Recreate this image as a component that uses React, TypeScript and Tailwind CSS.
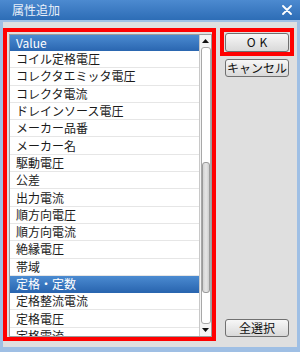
import React from "react";

// 属性追加ダイアログ
const items = [
  "コイル定格電圧",
  "コレクタエミッタ電圧",
  "コレクタ電流",
  "ドレインソース電圧",
  "メーカー品番",
  "メーカー名",
  "駆動電圧",
  "公差",
  "出力電流",
  "順方向電圧",
  "順方向電流",
  "絶縁電圧",
  "帯域",
  "定格・定数",
  "定格整流電流",
  "定格電圧",
  "定格電流",
];

const selected = "定格・定数";

const font = {
  fontFamily: '"Noto Sans CJK JP", "Noto Sans", sans-serif',
};

const DialogButton = ({ label, wide }: { label: string; wide?: boolean }) => (
  <button
    className={`w-[64px] rounded-[3px] border border-[#707070] bg-gradient-to-b from-[#f7f7f7] to-[#d9d9d9] text-[12px] leading-none text-[#111] ${
      wide ? "tracking-[4px] pl-[4px]" : ""
    }`}
  >
    {label}
  </button>
);

export default function App() {
  return (
    <div
      className="w-[300px] h-[352px] flex flex-col overflow-hidden"
      style={font}
    >
      {/* タイトルバー */}
      <div className="h-[20px] shrink-0 flex items-center justify-between bg-gradient-to-b from-[#4c8ad0] to-[#2d6db6] pl-[12px] pr-[8px]">
        <span className="text-[12px] leading-none text-[#e9f0f9]">属性追加</span>
        <svg width="10" height="10" viewBox="0 0 10 10">
          <path
            d="M1 1 L9 9 M9 1 L1 9"
            stroke="#ffffff"
            strokeWidth="1.8"
            strokeLinecap="round"
          />
        </svg>
      </div>

      <div className="flex-1 min-h-0 flex border-t-2 border-x-[3px] border-b-[5px] border-[#9fbfe4] bg-[#dfdfdf] pt-[6px] pb-[6px]">
        {/* リスト */}
        <div className="w-[213px] min-h-0 border-4 border-[#ff0000] pl-[2px] pt-[2px]">
          <div className="h-full flex border border-[#9c9c9c] bg-white overflow-hidden">
            <div className="flex-1 flex flex-col overflow-hidden">
              <div className="h-[16px] shrink-0 flex items-center pl-[6px] bg-gradient-to-b from-[#4b8bd1] to-[#2a66b0] text-[12px] text-white">
                Value
              </div>
              {items.map((item) => (
                <div
                  key={item}
                  className={`h-[17.3px] shrink-0 flex items-center pl-[6px] text-[12px] whitespace-nowrap border-b ${
                    item === selected
                      ? "bg-gradient-to-b from-[#4b8bd1] to-[#2a66b0] text-white border-[#2a66b0]"
                      : "text-[#1a1a1a] border-[#e6e6e6]"
                  }`}
                >
                  {item}
                </div>
              ))}
            </div>

            {/* スクロールバー */}
            <div className="w-[12px] shrink-0 flex flex-col items-center border-l border-[#c8c8c8] bg-[#f4f4f4]">
              <div className="h-[12px] shrink-0 flex items-center justify-center">
                <svg width="7" height="4" viewBox="0 0 7 4">
                  <path d="M0 4 L3.5 0 L7 4 Z" fill="#111" />
                </svg>
              </div>
              <div className="flex-1 w-[10px] flex flex-col rounded-[3px] border border-[#a8a8a8] bg-white">
                <div className="h-[114px]" />
                <div className="h-[131px] rounded-[3px] border border-[#9a9a9a] bg-gradient-to-r from-[#d2d2d2] via-[#e6e6e6] to-[#cfcfcf]" />
              </div>
              <div className="h-[12px] shrink-0 flex items-center justify-center">
                <svg width="7" height="4" viewBox="0 0 7 4">
                  <path d="M0 0 L3.5 4 L7 0 Z" fill="#111" />
                </svg>
              </div>
            </div>
          </div>
        </div>

        {/* ボタン */}
        <div className="ml-[4px] w-[74px] flex flex-col items-center pb-[4px]">
          <div className="w-[74px] h-[28px] flex items-center justify-center border-4 border-[#ff0000]">
            <div className="h-[19px] flex">
              <DialogButton label="OK" wide />
            </div>
          </div>
          <div className="mt-[3px] h-[18px] flex">
            <DialogButton label="キャンセル" />
          </div>
          <div className="mt-auto h-[18px] flex">
            <DialogButton label="全選択" />
          </div>
        </div>
      </div>
    </div>
  );
}
